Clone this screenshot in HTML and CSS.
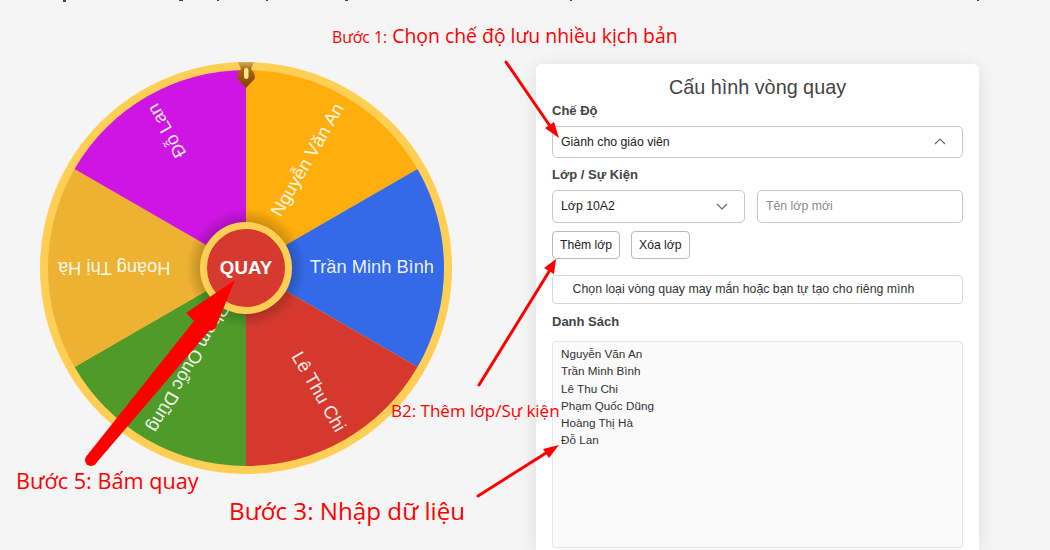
FILE: index.html
```html
<!DOCTYPE html>
<html lang="vi">
<head>
<meta charset="utf-8">
<title>Cấu hình vòng quay</title>
<link rel="stylesheet" href="styles.css">
</head>
<body>
<main class="page">
  <section class="wheel-col">
    <svg class="wheel" viewBox="0 0 412 412" width="412" height="412" aria-label="Vòng quay">
      <defs>
        <linearGradient id="pin" x1="0" x2="0" y1="0" y2="1">
          <stop offset="0" stop-color="#d2ae58"/>
          <stop offset="0.3" stop-color="#a9640c"/>
          <stop offset="1" stop-color="#7a4506"/>
        </linearGradient>
        <radialGradient id="hubshade" cx="0.5" cy="0.5" r="0.5">
          <stop offset="0.72" stop-color="#000" stop-opacity="0.22"/>
          <stop offset="1" stop-color="#000" stop-opacity="0"/>
        </radialGradient>
      </defs>
      <circle cx="206" cy="206" r="206" fill="#ffcf55"/>
      <g transform="translate(206 206)">
        <path d="M0 0V-198A198 198 0 0 1 171.5 -99Z" fill="#ffae0e"/>
        <path d="M0 0L171.5 -99A198 198 0 0 1 171.5 99Z" fill="#346ae8"/>
        <path d="M0 0L171.5 99A198 198 0 0 1 0 198Z" fill="#d5392e"/>
        <path d="M0 0V198A198 198 0 0 1 -171.5 99Z" fill="#4f9a29"/>
        <path d="M0 0L-171.5 99A198 198 0 0 1 -171.5 -99Z" fill="#eeb233"/>
        <path d="M0 0L-171.5 -99A198 198 0 0 1 0 -198Z" fill="#cf15e3"/>
        <g class="seg-text">
          <text transform="rotate(-60)" x="188" y="5">Nguyễn Văn An</text>
          <text transform="rotate(0)" x="188" y="5">Trần Minh Bình</text>
          <text transform="rotate(60)" x="188" y="5">Lê Thu Chi</text>
          <text transform="rotate(120)" x="188" y="6">Phạm Quốc Dũng</text>
          <text transform="rotate(180)" x="188" y="6">Hoàng Thị Hà</text>
          <text transform="rotate(240)" x="188" y="6">Đỗ Lan</text>
        </g>
        <circle r="60" fill="url(#hubshade)"/>
        <circle r="42.5" fill="#d63a2f" stroke="#ffcf55" stroke-width="7"/>
        <text class="hub-text" y="5.5">QUAY</text>
      </g>
      <path d="M198 0H214L211 7Q216 12 214.500 17L206 26L197.500 17Q196 12 201 7Z" fill="url(#pin)"/>
      <rect x="204" y="6" width="4.500" height="11" rx="2.200" fill="#ffe88a"/>
    </svg>
  </section>

  <section class="card">
    <h2 class="card-title">Cấu hình vòng quay</h2>
    <label class="field-label">Chế Độ</label>
    <div class="control control-mode">
      <span>Giành cho giáo viên</span>
      <svg class="chev" viewBox="0 0 12 7" width="12" height="7"><path d="M1 6L6 1L11 6"/></svg>
    </div>
    <label class="field-label label-class">Lớp / Sự Kiện</label>
    <div class="class-row">
      <div class="control control-class">
        <span>Lớp 10A2</span>
        <svg class="chev" viewBox="0 0 12 7" width="12" height="7"><path d="M1 1L6 6L11 1"/></svg>
      </div>
      <div class="control control-name"><span class="placeholder">Tên lớp mới</span></div>
    </div>
    <div class="btn-row">
      <button class="btn">Thêm lớp</button>
      <button class="btn">Xóa lớp</button>
    </div>
    <div class="info">Chọn loại vòng quay may mắn hoặc bạn tự tạo cho riêng mình</div>
    <label class="field-label label-list">Danh Sách</label>
    <div class="names">
      <div>Nguyễn Văn An</div>
      <div>Trần Minh Bình</div>
      <div>Lê Thu Chi</div>
      <div>Phạm Quốc Dũng</div>
      <div>Hoàng Thị Hà</div>
      <div>Đỗ Lan</div>
    </div>
  </section>
</main>

<svg class="overlay" viewBox="0 0 1050 550" width="1050" height="550">
  <g fill="#444">
    <rect x="63" y="0" width="3" height="2"/><rect x="179" y="0" width="4" height="1"/>
    <rect x="217" y="0" width="2" height="1"/><rect x="266" y="0" width="2" height="1"/>
    <rect x="345" y="0" width="3" height="1"/><rect x="570" y="0" width="2" height="1"/>
    <rect x="977" y="0" width="2" height="1"/>
  </g>
  <g stroke="#f00" fill="none" stroke-width="3" stroke-linecap="round">
    <path d="M506 62L550 126"/>
    <path d="M479 385L550 270"/>
    <path d="M478 496L546 453"/>
  </g>
  <g fill="#f00">
    <path d="M559 138L545 128L554 122Z"/>
    <path d="M556 259L544 268L554 274Z"/>
    <path d="M559 445L543 449L549 458Z"/>
    <path d="M235 280L186 313L194 321L86.400 456.200L95.600 463.800L209 331L215 329Z"/>
    <circle cx="91" cy="460" r="6"/>
  </g>
</svg>

<p class="note note-1"><span class="small">Bước 1:</span> Chọn chế độ lưu nhiều kịch bản</p>
<p class="note note-2">B2: Thêm lớp/Sự kiện</p>
<p class="note note-3">Bước 3: Nhập dữ liệu</p>
<p class="note note-5">Bước 5: Bấm quay</p>
</body>
</html>
```

FILE: styles.css
```css
html, body {
  margin: 0;
  height: 100%;
  overflow: hidden;
}
body {
  background: #f5f5f5;
  font-family: "Liberation Sans", Arial, sans-serif;
  color: #333;
  position: relative;
}
.page {
  display: flex;
  align-items: flex-start;
  padding: 62px 0 0 40px;
}
.wheel-col {
  width: 496px;
  flex: none;
}
.wheel {
  display: block;
}
.seg-text text {
  fill: #fff;
  fill-opacity: .92;
  font-size: 18.300px;
  text-anchor: end;
}
.hub-text {
  fill: #fff;
  font-size: 18.700px;
  font-weight: 700;
  text-anchor: middle;
}
.card {
  box-sizing: border-box;
  width: 443px;
  height: 486px;
  margin-top: 2px;
  padding: 11px 16px 0;
  background: #fff;
  border-radius: 6px 6px 0 0;
  box-shadow: 0 3px 18px rgba(0, 0, 0, .1);
  display: flex;
  flex-direction: column;
}
.card-title {
  margin: 0;
  font-size: 19.800px;
  font-weight: 400;
  line-height: 24px;
  text-align: center;
  color: #444;
}
.field-label {
  display: block;
  margin-top: 4px;
  font-size: 13px;
  font-weight: 700;
  line-height: 16px;
  color: #444;
}
.label-class {
  margin-top: 9px;
}
.label-list {
  margin-top: 10px;
}
.control {
  box-sizing: border-box;
  display: flex;
  align-items: center;
  justify-content: space-between;
  background: #fff;
  border: 1px solid #c8c8c8;
  border-radius: 5px;
  padding: 0 16px 1px 8px;
  font-size: 12.300px;
  color: #222;
}
.control-mode {
  height: 32px;
  margin-top: 7px;
}
.class-row {
  display: flex;
  gap: 12px;
  margin-top: 7px;
}
.control-class {
  width: 193px;
  height: 33px;
  flex: none;
}
.control-name {
  flex: 1;
  height: 33px;
}
.placeholder {
  color: #8a8a8a;
}
.chev {
  fill: none;
  stroke: #5d6470;
  stroke-width: 1.100;
}
.btn-row {
  display: flex;
  gap: 11px;
  margin-top: 8px;
}
.btn {
  box-sizing: border-box;
  height: 28px;
  padding: 0 7px 1px;
  background: #fff;
  border: 1px solid #b9b9b9;
  border-radius: 4px;
  font: 12.200px "Liberation Sans", Arial, sans-serif;
  color: #222;
}
.info {
  box-sizing: border-box;
  height: 29px;
  margin-top: 16px;
  padding: 0 0 0 19.500px;
  line-height: 27px;
  font-size: 12.350px;
  color: #333;
  border: 1px solid #d8d8d8;
  border-radius: 4px;
}
.names {
  box-sizing: border-box;
  height: 207px;
  margin-top: 11px;
  padding: 3px 8px;
  font-size: 11.700px;
  line-height: 17.300px;
  color: #333;
  background: #fafafa;
  border: 1px solid #e6e6e6;
  border-radius: 3px;
}
.overlay {
  position: absolute;
  left: 0;
  top: 0;
  pointer-events: none;
}
.note {
  position: absolute;
  margin: 0;
  color: #f00;
  font-family: "Open Sans", "Noto Sans", sans-serif;
  white-space: nowrap;
}
.note-1 {
  left: 332px;
  top: 22px;
  font-size: 19.400px;
  line-height: 27px;
}
.small {
  font-size: 15.800px;
}
.note-2 {
  left: 391px;
  top: 400px;
  font-size: 17px;
  line-height: 22px;
}
.note-3 {
  left: 229px;
  top: 495px;
  font-size: 24.200px;
  line-height: 32px;
}
.note-5 {
  left: 16px;
  top: 467px;
  font-size: 21.700px;
  line-height: 28px;
}
```
